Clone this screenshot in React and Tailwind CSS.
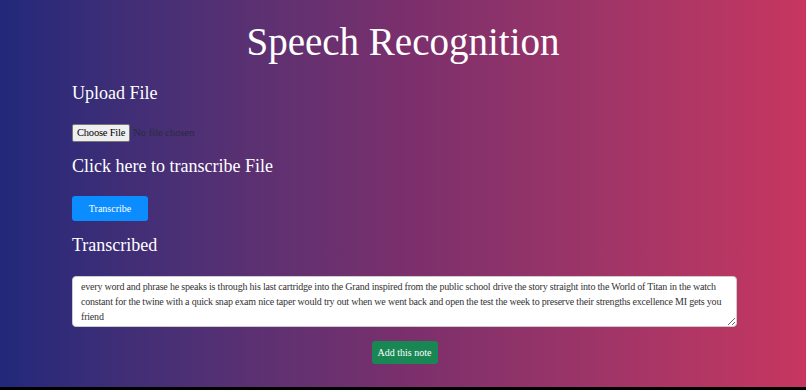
import { useState } from 'react'

const transcript =
  'every word and phrase he speaks is through his last cartridge into the Grand inspired from the public school drive the story straight into the World of Titan in the watch constant for the twine with a quick snap exam nice taper would try out when we went back and open the test the week to preserve their strengths excellence MI gets you friend'

export default function App() {
  const [text, setText] = useState(transcript)

  return (
    <div className="bg-black w-full h-[390px] overflow-hidden font-['Liberation_Serif','Times_New_Roman',serif]">
      <div className="h-[387px] bg-gradient-to-r from-[#22287a] via-[#7a2f6c] to-[#c7365f] text-white">
        <h1 className="text-center text-[39px] leading-none pt-[22px]">Speech Recognition</h1>

        <div className="ml-[72px] w-[665px] flex flex-col">
          {/* Upload */}
          <h3 className="text-[18px] leading-none mt-[23px]">Upload File</h3>
          <div className="mt-[22px] flex items-center leading-none">
            <button className="bg-[#efefef] text-black border border-[#767676] rounded-[2px] px-[4px] h-[18px] text-[10.5px] tracking-[-0.2px]">
              Choose File
            </button>
            <span className="ml-[3px] text-[#2b2b3b] text-[10.5px]">No file chosen</span>
          </div>

          {/* Transcribe */}
          <h3 className="text-[18px] leading-none mt-[15px]">Click here to transcribe File</h3>
          <div className="mt-[20px]">
            <button className="bg-[#0b8cff] text-white text-[10px] w-[76px] h-[25px] rounded-[3px]">
              Transcribe
            </button>
          </div>

          {/* Result */}
          <h3 className="text-[18px] leading-none mt-[15px]">Transcribed</h3>
          <textarea
            value={text}
            onChange={e => setText(e.target.value)}
            className="mt-[22px] w-full h-[51px] overflow-hidden bg-white text-[#333] text-[10px] tracking-[-0.2px] leading-[15px] rounded-[4px] pl-[8px] pr-[4px] py-[2px] outline-none border border-[#ccc]"
          />
          <div className="flex justify-center mt-[14px]">
            <button className="bg-[#198754] text-white text-[10px] w-[66px] h-[23px] rounded-[3px]">
              Add this note
            </button>
          </div>
        </div>
      </div>
    </div>
  )
}
